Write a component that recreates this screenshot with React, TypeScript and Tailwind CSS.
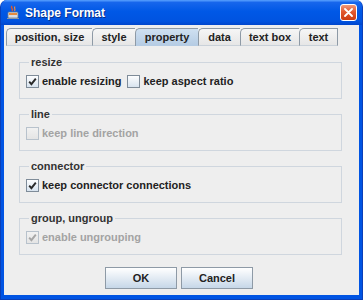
import React from 'react';

type Tab = { label: string; width: string; active?: boolean };

const TABS: Tab[] = [
  { label: 'position, size', width: 'w-[86px]' },
  { label: 'style', width: 'w-[43px]' },
  { label: 'property', width: 'w-[63px]', active: true },
  { label: 'data', width: 'w-[42px]' },
  { label: 'text box', width: 'w-[59px]' },
  { label: 'text', width: 'w-[39px]' },
];

function AppIcon() {
  return (
    <svg width="15" height="15" viewBox="0 0 15 15">
      <path d="M6 1 C4 3 8 4 6 6" stroke="#e0572a" strokeWidth="1.4" fill="none" />
      <path d="M9 1.5 C7.5 3.5 10 4 8.5 6" stroke="#f08a3a" strokeWidth="1.2" fill="none" />
      <rect x="2" y="7" width="10" height="6" rx="1" fill="#d9dde3" stroke="#6f7b88" strokeWidth="0.8" />
      <rect x="3" y="8" width="8" height="2" fill="#e68a3c" />
      <path d="M1 13.5 H13" stroke="#8a96a3" strokeWidth="1" />
    </svg>
  );
}

function CloseButton() {
  return (
    <div className="w-[17px] h-[17px] rounded-[3px] border border-white bg-[linear-gradient(to_bottom,#f09a7c,#e2582f_45%,#cc3c12)] flex items-center justify-center">
      <svg width="9" height="9" viewBox="0 0 9 9">
        <path d="M1 1 L8 8 M8 1 L1 8" stroke="white" strokeWidth="1.8" strokeLinecap="round" />
      </svg>
    </div>
  );
}

function Check({ checked, disabled }: { checked: boolean; disabled?: boolean }) {
  return (
    <svg width="13" height="13" viewBox="0 0 13 13" className="shrink-0">
      <defs>
        <linearGradient id={disabled ? 'cbd' : 'cb'} x1="0" y1="0" x2="0" y2="1">
          <stop offset="0" stopColor={disabled ? '#f2f2f2' : '#ffffff'} />
          <stop offset="1" stopColor={disabled ? '#e4e4e4' : '#d6e2ee'} />
        </linearGradient>
      </defs>
      <rect
        x="0.5"
        y="0.5"
        width="12"
        height="12"
        fill={`url(#${disabled ? 'cbd' : 'cb'})`}
        stroke={disabled ? '#b8c2cc' : '#7f8c99'}
      />
      {checked && (
        <path
          d="M3.2 6.6 L5.4 9.2 L9.8 3.6"
          stroke={disabled ? '#a6a6a6' : '#2a2a2a'}
          strokeWidth="1.9"
          fill="none"
        />
      )}
    </svg>
  );
}

function CheckItem({ label, checked, disabled }: { label: string; checked: boolean; disabled?: boolean }) {
  return (
    <div className="flex items-center gap-[3px] h-[18px]">
      <Check checked={checked} disabled={disabled} />
      <span className={disabled ? 'text-[#a3a3a3]' : 'text-[#222]'}>{label}</span>
    </div>
  );
}

function Group({ title, children }: { title: string; children: React.ReactNode }) {
  return (
    <fieldset className="border border-[#cfd6de] px-[6px] pt-[3px] pb-[8px]">
      <legend className="ml-[3px] px-[2px] leading-[13px] text-[#333]">{title}</legend>
      <div className="flex items-center gap-[6px]">{children}</div>
    </fieldset>
  );
}

export default function App() {
  return (
    <div className="w-[363px] h-[300px] bg-white font-['Liberation_Sans',Arial,sans-serif]">
      <div className="w-full h-full rounded-t-[7px] bg-[#0054e3] flex flex-col border-x border-b border-[#0a3fb8] overflow-hidden">
        <div className="h-[25px] shrink-0 flex items-center pl-[5px] pr-[5px] bg-[linear-gradient(to_bottom,#5aa2ff_0%,#1766ec_10%,#0058e6_45%,#0053e0_85%,#0046cc_100%)]">
          <AppIcon />
          <span className="ml-[4px] text-white font-bold text-[12px] [text-shadow:1px_1px_0_#0a2f8a]">
            Shape Format
          </span>
          <div className="ml-auto">
            <CloseButton />
          </div>
        </div>
        <div className="flex-1 mx-[3px] mb-[4px] bg-[#eeeeee] flex flex-col text-[11px] font-bold">
          <div className="flex pt-[3px] pl-[2px]">
            {TABS.map((t, i) => (
              <div
                key={t.label}
                className={`${t.width} h-[18px] flex items-center justify-center border-t border-l border-[#8e9aa6] rounded-tl-[5px] text-[#222] ${
                  i === TABS.length - 1 ? 'border-r' : ''
                } ${
                  t.active
                    ? 'bg-[linear-gradient(to_bottom,#cfe0f1,#b4cbe3)]'
                    : 'bg-[linear-gradient(to_bottom,#f6f6f6,#e6e6e6)] border-b border-b-[#c9d1d9]'
                }`}
              >
                {t.label}
              </div>
            ))}
          </div>
          <div className="flex flex-col gap-[9px] mt-[10px] ml-[15px] mr-[17px]">
            <Group title="resize">
              <CheckItem label="enable resizing" checked />
              <CheckItem label="keep aspect ratio" checked={false} />
            </Group>
            <Group title="line">
              <CheckItem label="keep line direction" checked={false} disabled />
            </Group>
            <Group title="connector">
              <CheckItem label="keep connector connections" checked />
            </Group>
            <Group title="group, ungroup">
              <CheckItem label="enable ungrouping" checked disabled />
            </Group>
          </div>
          <div className="flex justify-center gap-[4px] mt-[12px] pr-[5px]">
            <button className="w-[72px] h-[22px] border border-[#8e9aa6] bg-[linear-gradient(to_bottom,#ffffff,#dde7f1_60%,#c6d7e8)] text-[#222] font-bold">
              OK
            </button>
            <button className="w-[72px] h-[22px] border border-[#8e9aa6] bg-[linear-gradient(to_bottom,#ffffff,#dde7f1_60%,#c6d7e8)] text-[#222] font-bold">
              Cancel
            </button>
          </div>
        </div>
      </div>
    </div>
  );
}
